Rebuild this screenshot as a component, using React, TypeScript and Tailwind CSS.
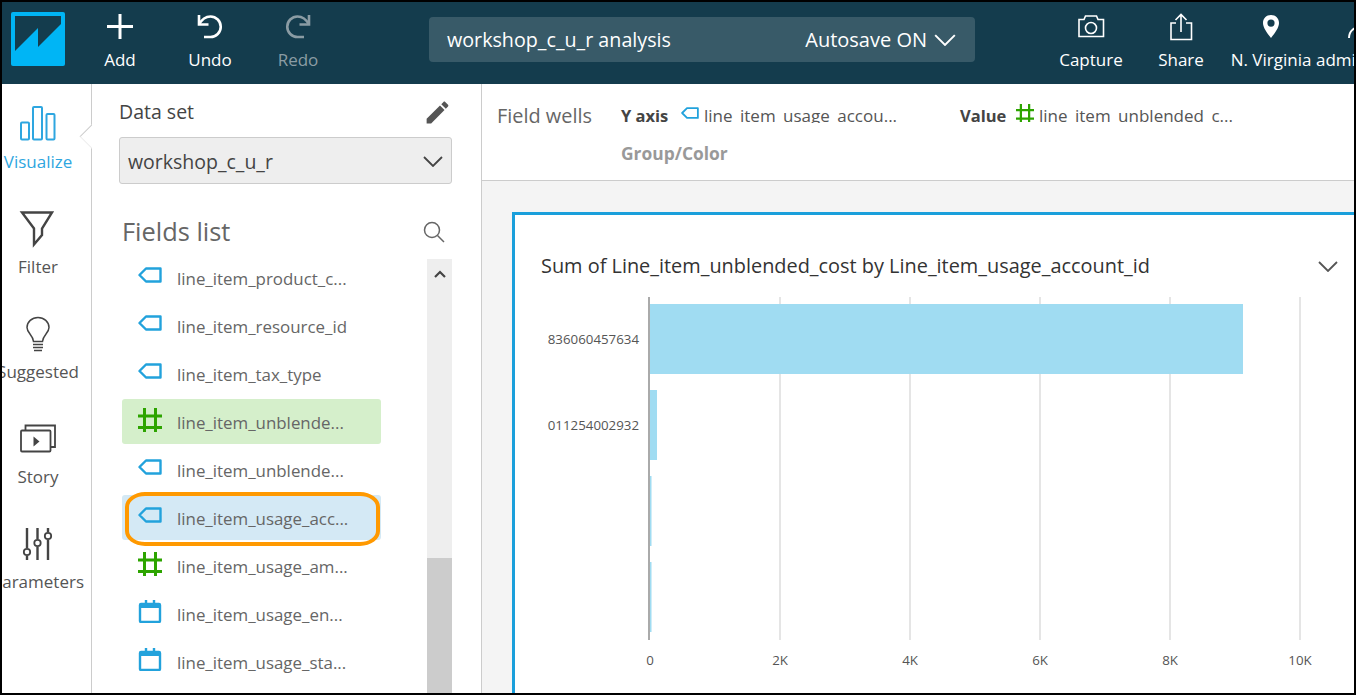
import type { ReactNode } from "react";

const BLUE = "#22a2dc";
const GREEN = "#2da400";

function Logo() {
  return (
    <svg width="54" height="54" viewBox="0 0 54 54" className="shrink-0">
      <rect width="54" height="54" rx="2" fill="#00b5f5" />
      <path d="M4 4H50V12L27 35V16L4 39Z" fill="#143c4d" />
    </svg>
  );
}

function TagIcon({ className }: { className: string }) {
  return (
    <svg viewBox="0 0 24 16" className={className} fill="none" stroke={BLUE} strokeWidth="2.4" strokeLinejoin="round">
      <path d="M8 1.5H22.5V14.5H8L1.5 8Z" />
    </svg>
  );
}

function HashIcon({ className }: { className: string }) {
  return (
    <svg viewBox="0 0 24 24" className={className} fill="none" stroke={GREEN} strokeWidth="3">
      <path d="M6.5 0V24M17.5 0V24M0 8H24M0 19.5H24" />
    </svg>
  );
}

function CalendarIcon({ className }: { className: string }) {
  return (
    <svg viewBox="0 0 24 24" className={className} fill="none" stroke={BLUE}>
      <rect x="2" y="5" width="20" height="18" rx="1" strokeWidth="2.4" />
      <path d="M2 7.5H22" strokeWidth="3" />
      <path d="M8 1V7M16 1V7" strokeWidth="2.4" />
    </svg>
  );
}

function Chevron({ className, color = "#444" }: { className: string; color?: string }) {
  return (
    <svg viewBox="0 0 20 11" className={className} fill="none" stroke={color} strokeWidth="1.8">
      <path d="M1 1L10 10L19 1" />
    </svg>
  );
}

function NavItem({ icon, label, muted, width = "w-[90px]" }: { icon: ReactNode; label: string; muted?: boolean; width?: string }) {
  return (
    <div className={`flex ${width} shrink-0 flex-col items-center pt-[11px]`}>
      <div className="h-[30px] w-[30px]">{icon}</div>
      <span className={`mt-[5px] text-[17px] leading-[24px] whitespace-nowrap ${muted ? "text-[#8b9ca4]" : "text-white"}`}>
        {label}
      </span>
    </div>
  );
}

function Header() {
  return (
    <header className="flex h-[82px] shrink-0 bg-[#143c4d]">
      <div className="ml-[9px] w-[64px] shrink-0 pt-[10px]">
        <Logo />
      </div>
      <NavItem
        label="Add"
        icon={
          <svg viewBox="105 13 30 30" fill="none" stroke="#fff" strokeWidth="3">
            <path d="M120 14V39M107 26.5H133" />
          </svg>
        }
      />
      <NavItem
        label="Undo"
        icon={
          <svg viewBox="195 13 30 30" fill="none" stroke="#fff" strokeWidth="2.6">
            <path d="M199 15V24.5H208.5" />
            <path d="M199 24.5C202 19 206 16.5 210.5 16.5A10.2 10.2 0 0 1 210.5 37H204" />
          </svg>
        }
      />
      <NavItem
        width="w-[86px]"
        label="Redo"
        muted
        icon={
          <svg viewBox="283 13 30 30" fill="none" stroke="#8b9ca4" strokeWidth="2.6">
            <path d="M309 15V24.5H299.5" />
            <path d="M309 24.5C306 19 302 16.5 297.5 16.5A10.2 10.2 0 0 0 297.5 37H304" />
          </svg>
        }
      />
      <div className="mt-[15px] ml-[88px] flex h-[45px] w-[546px] shrink-0 items-center rounded-[4px] bg-[#385a68] pr-[18px] pl-[18px] text-[19.7px] text-white">
        <span className="whitespace-nowrap">workshop_c_u_r analysis</span>
        <span className="ml-auto text-[20px] whitespace-nowrap">Autosave ON</span>
        <Chevron className="ml-[6px] h-[12px] w-[24px]" color="#fff" />
      </div>
      <div className="ml-[71px] flex">
        <NavItem
          label="Capture"
          icon={
            <svg viewBox="1076 13 30 30" fill="none" stroke="#fff" strokeWidth="1.6">
              <path d="M1079 19.5H1084L1085.5 16H1096.5L1098 19.5H1103.5V36.5H1079Z" />
              <circle cx="1091" cy="28" r="5.5" />
            </svg>
          }
        />
        <NavItem
          label="Share"
          icon={
            <svg viewBox="1166 12 30 30" fill="none" stroke="#fff" strokeWidth="1.6">
              <path d="M1176 22H1171V38.5H1191.5V22H1186" />
              <path d="M1181 31V14M1175.5 19L1181 13.5L1186.5 19" />
            </svg>
          }
        />
        <NavItem
          label="N. Virginia"
          icon={
            <svg viewBox="1256 13 30 30">
              <path
                fillRule="evenodd"
                fill="#fff"
                d="M1271 15C1275.7 15 1279 18.5 1279 23C1279 27.5 1275 33 1271 38C1267 33 1263 27.5 1263 23C1263 18.5 1266.3 15 1271 15ZM1271 19.5A3.6 3.6 0 1 0 1271 26.7A3.6 3.6 0 1 0 1271 19.5Z"
              />
            </svg>
          }
        />
        <div className="flex w-[90px] shrink-0 flex-col pt-[11px]">
          <div className="ml-[30px] h-[30px] w-[30px]">
            <svg viewBox="1346 13 30 30" fill="none" stroke="#fff" strokeWidth="2">
              <circle cx="1361" cy="20" r="5.5" />
              <path d="M1349 38C1349 31 1354 27 1361 27C1368 27 1373 31 1373 38" />
            </svg>
          </div>
          <span className="mt-[5px] text-[17px] leading-[24px] whitespace-nowrap text-white">admin</span>
        </div>
      </div>
    </header>
  );
}

function RailItem({ icon, label, active }: { icon: ReactNode; label: string; active?: boolean }) {
  return (
    <div className="flex h-[105px] w-[72px] flex-col items-center">
      <div className="h-[40px] w-[40px] shrink-0">{icon}</div>
      <span className={`mt-[6px] text-[17px] leading-[24px] whitespace-nowrap ${active ? "text-[#2ea6e0]" : "text-[#555]"}`}>
        {label}
      </span>
    </div>
  );
}

function Rail() {
  return (
    <nav className="relative w-[90px] shrink-0 border-r border-[#ccc] pt-[20px]">
      <RailItem
        active
        label="Visualize"
        icon={
          <svg viewBox="18 104 40 40" fill="none" stroke="#2ea6e0" strokeWidth="2">
            <rect x="21" y="122.5" width="8" height="17" rx="1" />
            <rect x="33" y="107" width="9" height="32.5" rx="1" />
            <rect x="46.5" y="114" width="8" height="25.5" rx="1" />
          </svg>
        }
      />
      <RailItem
        label="Filter"
        icon={
          <svg viewBox="18 209 40 40" fill="none" stroke="#444" strokeWidth="2.4">
            <path d="M22 212.5H52L42 228.5V235L34 244.5V228.5Z" />
          </svg>
        }
      />
      <RailItem
        label="Suggested"
        icon={
          <svg viewBox="18 314 40 40" fill="none" stroke="#444" strokeWidth="1.5">
            <path d="M33.5 341.5C33 335 27 333 27 327.5A11 10 0 0 1 49 327.5C49 333 43 335 42.5 341.5Z" />
            <path d="M33 344.5H43M33 347.5H43M34 350.5H42" />
          </svg>
        }
      />
      <RailItem
        label="Story"
        icon={
          <svg viewBox="18 419 40 40" fill="none" stroke="#444" strokeWidth="1.8">
            <rect x="21" y="430.5" width="29.5" height="21" rx="1" />
            <path d="M25.5 430V425.5H55V447H50.5" />
            <path d="M33.5 436.5L39.5 441.5L33.5 446.5Z" fill="#444" stroke="none" />
          </svg>
        }
      />
      <RailItem
        label="Parameters"
        icon={
          <svg viewBox="18 524 40 40" fill="none" stroke="#444" strokeWidth="2.4">
            <path d="M27 528V548M27 556V560M37.5 528V539M37.5 547V560M48 528V532M48 540V560" />
            <g strokeWidth="1.8">
              <circle cx="27" cy="552" r="3.2" />
              <circle cx="37.5" cy="543" r="3.2" />
              <circle cx="48" cy="536" r="3.2" />
            </g>
          </svg>
        }
      />
      <span className="absolute top-[44px] -right-[9px] h-[17px] w-[17px] rotate-45 border-b border-l border-b-[#eee] border-l-[#ccc] bg-white" />
    </nav>
  );
}

const FIELDS: { name: string; kind: "tag" | "hash" | "date"; tone?: "green" | "blue" }[] = [
  { name: "line_item_product_c...", kind: "tag" },
  { name: "line_item_resource_id", kind: "tag" },
  { name: "line_item_tax_type", kind: "tag" },
  { name: "line_item_unblende...", kind: "hash", tone: "green" },
  { name: "line_item_unblende...", kind: "tag" },
  { name: "line_item_usage_acc...", kind: "tag", tone: "blue" },
  { name: "line_item_usage_am...", kind: "hash" },
  { name: "line_item_usage_en...", kind: "date" },
  { name: "line_item_usage_sta...", kind: "date" },
];

function FieldRow({ field }: { field: (typeof FIELDS)[number] }) {
  const bg = field.tone === "green" ? "bg-[#d5efcb]" : field.tone === "blue" ? "bg-[#d4e9f5]" : "";
  return (
    <div className={`relative flex h-[45px] shrink-0 items-center rounded-[3px] pl-[16px] ${bg}`}>
      <div className="flex w-[24px] shrink-0 justify-center">
        {field.kind === "tag" && <TagIcon className="h-[16px] w-[24px] -translate-y-[3px]" />}
        {field.kind === "hash" && <HashIcon className="h-[24px] w-[24px] -translate-y-[2px]" />}
        {field.kind === "date" && <CalendarIcon className="h-[24px] w-[24px] -translate-y-[3px]" />}
      </div>
      <span className="ml-[15px] pt-[2px] text-[16.9px] whitespace-nowrap text-[#666]">{field.name}</span>
      {field.tone === "blue" && (
        <span className="absolute -top-[3px] right-px -bottom-[6px] left-[3px] rounded-[20px/15px] border-[4px] border-[#ff9900]" />
      )}
    </div>
  );
}

function FieldsPanel() {
  return (
    <aside className="flex w-[390px] shrink-0 flex-col border-r border-[#ccc] pl-[27px]">
      <div className="flex h-[53px] items-center justify-between pt-[3px] pr-[29px]">
        <span className="text-[19.5px] text-[#444]">Data set</span>
        <svg viewBox="0 0 24 24" fill="#555" className="h-[29px] w-[29px]">
          <path d="M3 17.25V21h3.75L17.81 9.94l-3.75-3.75L3 17.25zM20.71 7.04c.39-.39.39-1.02 0-1.41l-2.34-2.34c-.39-.39-1.02-.39-1.41 0l-1.83 1.83 3.75 3.75 1.83-1.83z" />
        </svg>
      </div>
      <div className="flex h-[47px] w-[333px] items-center justify-between rounded-[3px] border border-[#ccc] bg-[#eee] pt-[2px] pr-[8px] pl-[8px] text-[19.5px] text-[#444]">
        <span>workshop_c_u_r</span>
        <Chevron className="h-[11px] w-[20px]" />
      </div>
      <div className="flex h-[71px] items-center justify-between pt-[24px] pr-[36px] pl-[3px]">
        <span className="text-[25.4px] text-[#666]">Fields list</span>
        <svg viewBox="0 0 22 22" fill="none" stroke="#666" strokeWidth="1.5" className="h-[22px] w-[22px]">
          <circle cx="9" cy="9" r="7.5" />
          <path d="M14.5 14.5L21 21" />
        </svg>
      </div>
      <div className="flex min-h-0 flex-1">
        <div className="ml-[3px] flex w-[259px] shrink-0 flex-col gap-[3px]">
          {FIELDS.map((f, i) => (
            <FieldRow key={i} field={f} />
          ))}
        </div>
        <div className="mt-[4px] ml-[46px] flex w-[25px] shrink-0 flex-col bg-[#eee]">
          <div className="flex h-[299px] justify-center pt-[11px]">
            <svg viewBox="0 0 12 8" fill="none" stroke="#444" strokeWidth="2.2" className="h-[8px] w-[12px]">
              <path d="M1 7L6 2L11 7" />
            </svg>
          </div>
          <div className="flex-1 bg-[#ccc]" />
        </div>
      </div>
    </aside>
  );
}

function Well({ label, labelWidth, icon, value, width }: { label: string; labelWidth: string; icon: ReactNode; value: string; width: string }) {
  return (
    <div className={`flex items-start ${width}`}>
      <span className={`text-[16.5px] leading-[24px] font-bold whitespace-nowrap text-[#444] ${labelWidth}`}>{label}</span>
      <div className="shrink-0">{icon}</div>
      <span className="ml-[5px] h-[19px] overflow-hidden text-[17px] leading-[24px] whitespace-nowrap text-[#555]">
        {value}
      </span>
    </div>
  );
}

function FieldWells() {
  return (
    <div className="flex h-[97px] shrink-0 border-b border-[#ccc] bg-white pt-[20px] pl-[15px]">
      <span className="w-[124px] shrink-0 text-[19.9px] leading-[24px] whitespace-nowrap text-[#666]">Field wells</span>
      <div className="flex flex-col">
        <div className="flex">
          <Well
            label="Y axis"
            labelWidth="w-[60px]"
            icon={<TagIcon className="mt-[2px] h-[14px] w-[18px]" />}
            value="line_item_usage_accou..."
            width="w-[339px]"
          />
          <Well
            label="Value"
            labelWidth="w-[56px]"
            icon={<HashIcon className="h-[18px] w-[18px]" />}
            value="line_item_unblended_c..."
            width="w-[300px]"
          />
        </div>
        <span className="mt-[13px] text-[17.4px] leading-[24px] font-bold text-[#999]">Group/Color</span>
      </div>
    </div>
  );
}

const GRID = [
  { x: 780, label: "2K" },
  { x: 910, label: "4K" },
  { x: 1040, label: "6K" },
  { x: 1170, label: "8K" },
  { x: 1300, label: "10K" },
];

function Chart() {
  return (
    <svg viewBox="515 290 840 400" className="mt-[11px] block h-[400px] w-[840px]" fontFamily="'Open Sans', sans-serif" fontSize="13.3">
      {GRID.map((g) => (
        <g key={g.x}>
          <line x1={g.x} x2={g.x} y1="297" y2="640" stroke="#ddd" strokeWidth="1.5" />
          <text x={g.x} y="664.5" textAnchor="middle" fill="#555">
            {g.label}
          </text>
        </g>
      ))}
      <text x="650" y="664.5" textAnchor="middle" fill="#555">
        0
      </text>
      <rect x="650" y="304" width="593" height="70" fill="#a0dcf2" />
      <rect x="650" y="390" width="7" height="70" fill="#a0dcf2" />
      <rect x="650" y="476" width="1.5" height="70" fill="#a0dcf2" />
      <rect x="650" y="562" width="1.5" height="70" fill="#a0dcf2" />
      <line x1="649" x2="649" y1="297" y2="640" stroke="#aaa" strokeWidth="2" />
      <text x="639" y="344" textAnchor="end" fill="#555">
        836060457634
      </text>
      <text x="639" y="430" textAnchor="end" fill="#555">
        011254002932
      </text>
    </svg>
  );
}

export default function App() {
  return (
    <div className="flex h-[695px] w-[1356px] flex-col overflow-hidden border-2 border-black bg-white font-['Open_Sans','Noto_Sans',sans-serif]">
      <Header />
      <div className="flex min-h-0 flex-1">
        <Rail />
        <FieldsPanel />
        <main className="flex min-w-0 flex-1 flex-col">
          <FieldWells />
          <div className="min-h-0 flex-1 overflow-hidden bg-[#f4f4f4] pt-[31px] pl-[30px]">
            <div className="h-[600px] w-[860px] border-[3px] border-[#1a9fdb] bg-white">
              <div className="flex items-center justify-between pt-[38px] pr-[31px] pl-[26px]">
                <span className="text-[19.9px] leading-[26px] whitespace-nowrap text-[#333]">
                  Sum of Line_item_unblended_cost by Line_item_usage_account_id
                </span>
                <Chevron className="h-[11px] w-[20px]" color="#555" />
              </div>
              <Chart />
            </div>
          </div>
        </main>
      </div>
    </div>
  );
}
